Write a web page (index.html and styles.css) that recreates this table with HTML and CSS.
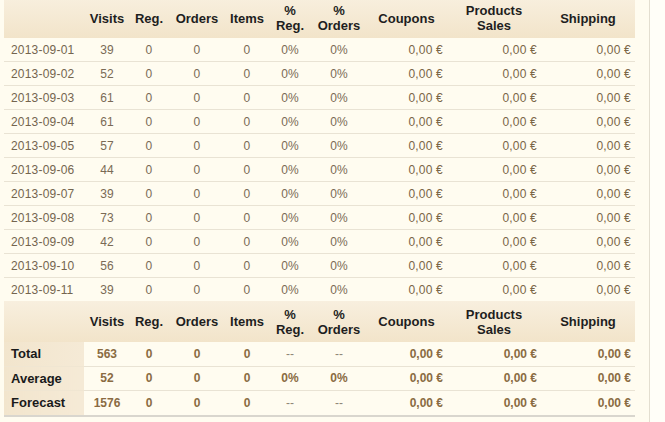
FILE: index.html
```html
<!DOCTYPE html>
<html>
<head>
<meta charset="utf-8">
<link rel="stylesheet" href="styles.css">
</head>
<body>
<div class="panel">
<table class="stats">
  <colgroup>
    <col class="c-date"><col class="c-visits"><col class="c-reg"><col class="c-orders"><col class="c-items"><col class="c-preg"><col class="c-pord"><col class="c-coup"><col class="c-sales"><col class="c-ship">
  </colgroup>
  <thead>
    <tr class="head">
      <th></th><th>Visits</th><th>Reg.</th><th>Orders</th><th>Items</th><th>%<br>Reg.</th><th>%<br>Orders</th><th>Coupons</th><th>Products<br>Sales</th><th>Shipping</th>
    </tr>
  </thead>
  <tbody>
    <tr><td class="date">2013-09-01</td><td>39</td><td>0</td><td>0</td><td>0</td><td>0%</td><td>0%</td><td class="num">0,00 €</td><td class="num">0,00 €</td><td class="num">0,00 €</td></tr>
    <tr><td class="date">2013-09-02</td><td>52</td><td>0</td><td>0</td><td>0</td><td>0%</td><td>0%</td><td class="num">0,00 €</td><td class="num">0,00 €</td><td class="num">0,00 €</td></tr>
    <tr><td class="date">2013-09-03</td><td>61</td><td>0</td><td>0</td><td>0</td><td>0%</td><td>0%</td><td class="num">0,00 €</td><td class="num">0,00 €</td><td class="num">0,00 €</td></tr>
    <tr><td class="date">2013-09-04</td><td>61</td><td>0</td><td>0</td><td>0</td><td>0%</td><td>0%</td><td class="num">0,00 €</td><td class="num">0,00 €</td><td class="num">0,00 €</td></tr>
    <tr><td class="date">2013-09-05</td><td>57</td><td>0</td><td>0</td><td>0</td><td>0%</td><td>0%</td><td class="num">0,00 €</td><td class="num">0,00 €</td><td class="num">0,00 €</td></tr>
    <tr><td class="date">2013-09-06</td><td>44</td><td>0</td><td>0</td><td>0</td><td>0%</td><td>0%</td><td class="num">0,00 €</td><td class="num">0,00 €</td><td class="num">0,00 €</td></tr>
    <tr><td class="date">2013-09-07</td><td>39</td><td>0</td><td>0</td><td>0</td><td>0%</td><td>0%</td><td class="num">0,00 €</td><td class="num">0,00 €</td><td class="num">0,00 €</td></tr>
    <tr><td class="date">2013-09-08</td><td>73</td><td>0</td><td>0</td><td>0</td><td>0%</td><td>0%</td><td class="num">0,00 €</td><td class="num">0,00 €</td><td class="num">0,00 €</td></tr>
    <tr><td class="date">2013-09-09</td><td>42</td><td>0</td><td>0</td><td>0</td><td>0%</td><td>0%</td><td class="num">0,00 €</td><td class="num">0,00 €</td><td class="num">0,00 €</td></tr>
    <tr><td class="date">2013-09-10</td><td>56</td><td>0</td><td>0</td><td>0</td><td>0%</td><td>0%</td><td class="num">0,00 €</td><td class="num">0,00 €</td><td class="num">0,00 €</td></tr>
    <tr class="last"><td class="date">2013-09-11</td><td>39</td><td>0</td><td>0</td><td>0</td><td>0%</td><td>0%</td><td class="num">0,00 €</td><td class="num">0,00 €</td><td class="num">0,00 €</td></tr>
  </tbody>
  <tbody class="totals">
    <tr class="head">
      <th></th><th>Visits</th><th>Reg.</th><th>Orders</th><th>Items</th><th>%<br>Reg.</th><th>%<br>Orders</th><th>Coupons</th><th>Products<br>Sales</th><th>Shipping</th>
    </tr>
    <tr><th class="label">Total</th><td>563</td><td>0</td><td>0</td><td>0</td><td class="dash">--</td><td class="dash">--</td><td class="num">0,00 €</td><td class="num">0,00 €</td><td class="num">0,00 €</td></tr>
    <tr><th class="label">Average</th><td>52</td><td>0</td><td>0</td><td>0</td><td>0%</td><td>0%</td><td class="num">0,00 €</td><td class="num">0,00 €</td><td class="num">0,00 €</td></tr>
    <tr class="end"><th class="label">Forecast</th><td>1576</td><td>0</td><td>0</td><td>0</td><td class="dash">--</td><td class="dash">--</td><td class="num">0,00 €</td><td class="num">0,00 €</td><td class="num">0,00 €</td></tr>
  </tbody>
</table>
</div>
</body>
</html>
```

FILE: styles.css
```css
html, body {
  margin: 0;
  padding: 0;
  background: #fffef8;
}
body {
  font-family: "Liberation Sans", Arial, sans-serif;
}
.panel {
  width: 650px;
  height: 422px;
  background: #fffcf0;
  border-right: 1px solid #e3ded0;
  box-sizing: border-box;
  padding-left: 4px;
  overflow: hidden;
}
.stats {
  border-collapse: collapse;
  table-layout: fixed;
  width: 631px;
  margin-top: -2px;
  font-size: 12px;
}
.c-date { width: 80px; }
.c-visits { width: 46px; }
.c-reg { width: 38px; }
.c-orders { width: 58px; }
.c-items { width: 42px; }
.c-preg { width: 44px; }
.c-pord { width: 54px; }
.c-coup { width: 81px; }
.c-sales { width: 94px; }
.c-ship { width: 94px; }

.head th {
  height: 40px;
  padding: 0;
  font-size: 13px;
  font-weight: bold;
  color: #1e1e1e;
  line-height: 15px;
  text-align: center;
  background: linear-gradient(#f8efde, #f2e4ca);
}
.totals .head th {
  height: 41px;
}
.stats td {
  height: 23px;
  padding: 0 4px;
  text-align: center;
  color: #7a6a55;
  border-bottom: 1px solid #e9e3d4;
  letter-spacing: 0.2px;
}
.stats td.date {
  text-align: left;
  padding-left: 7px;
  color: #74654f;
}
.stats td.num {
  text-align: right;
  padding-right: 4px;
  color: #7a6547;
}
.stats tr.last td {
  border-bottom: none;
}
.totals td {
  font-weight: bold;
  color: #8a6b42;
  height: 23.5px;
  letter-spacing: 0;
}
.totals td.num {
  color: #8a6b42;
}
.totals td.dash {
  font-weight: normal;
  color: #8f8577;
}
.totals th.label {
  text-align: left;
  padding: 0 0 0 7px;
  font-size: 13px;
  font-weight: bold;
  color: #1a1a1a;
  background: linear-gradient(90deg, #f2e5cd, #f5ead6);
  border-bottom: 1px solid #f0e6d2;
}
.totals tr.end td, .totals tr.end th.label {
  border-bottom: 2px solid #d9d6ce;
}
```
